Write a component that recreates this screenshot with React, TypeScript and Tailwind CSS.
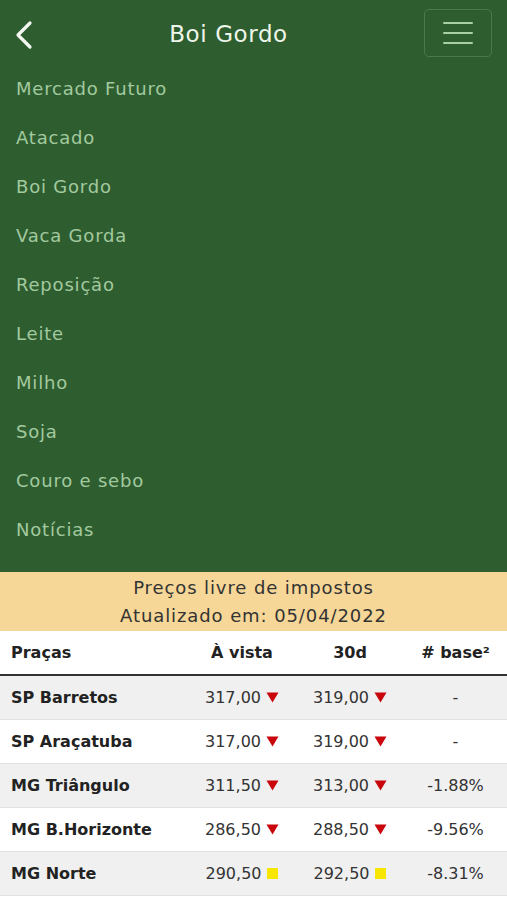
import React from "react";

const menu = [
  "Mercado Futuro",
  "Atacado",
  "Boi Gordo",
  "Vaca Gorda",
  "Reposição",
  "Leite",
  "Milho",
  "Soja",
  "Couro e sebo",
  "Notícias",
];

type Trend = "down" | "flat";

interface Row {
  name: string;
  vista: string;
  d30: string;
  base: string;
  trend: Trend;
}

const rows: Row[] = [
  { name: "SP Barretos", vista: "317,00", d30: "319,00", base: "-", trend: "down" },
  { name: "SP Araçatuba", vista: "317,00", d30: "319,00", base: "-", trend: "down" },
  { name: "MG Triângulo", vista: "311,50", d30: "313,00", base: "-1.88%", trend: "down" },
  { name: "MG B.Horizonte", vista: "286,50", d30: "288,50", base: "-9.56%", trend: "down" },
  { name: "MG Norte", vista: "290,50", d30: "292,50", base: "-8.31%", trend: "flat" },
];

const TrendIcon = ({ trend }: { trend: Trend }) =>
  trend === "down" ? (
    <svg width="13" height="11" viewBox="0 0 13 11" className="ml-[5px]">
      <path d="M0.5 0.5 H12.5 L6.5 10.5 Z" fill="#c8060b" />
    </svg>
  ) : (
    <span className="ml-[6px] inline-block h-[11px] w-[11px] bg-[#f7e600]" />
  );

const Price = ({ value, trend }: { value: string; trend: Trend }) => (
  <div className="flex items-center justify-center">
    <span>{value}</span>
    <TrendIcon trend={trend} />
  </div>
);

export default function App() {
  return (
    <div
      className="h-[900px] w-[507px] overflow-hidden bg-white"
      style={{ fontFamily: '"DejaVu Sans", Verdana, sans-serif' }}
    >
      <div className="bg-[#2e5e30] pb-[18px]">
        <div className="relative flex h-[64px] items-center justify-center">
          <svg
            width="20"
            height="30"
            viewBox="0 0 20 30"
            className="absolute left-[14px] top-[20px]"
          >
            <path
              d="M16 3 L4 15 L16 27"
              fill="none"
              stroke="#f4f8f0"
              strokeWidth="3.2"
              strokeLinecap="round"
              strokeLinejoin="round"
            />
          </svg>
          <h1 className="mr-[50px] mt-[5px] text-[23px] leading-none tracking-[0.6px] text-[#eef5ea]">
            Boi Gordo
          </h1>
          <button className="absolute right-[15px] top-[9px] flex h-[48px] w-[68px] flex-col items-center justify-center gap-[8px] rounded-[5px] border border-[#4a7a4b]">
            <span className="h-[2px] w-[30px] rounded-full bg-[#a8d0a3]" />
            <span className="h-[2px] w-[30px] rounded-full bg-[#a8d0a3]" />
            <span className="h-[2px] w-[30px] rounded-full bg-[#a8d0a3]" />
          </button>
        </div>
        <nav className="flex flex-col">
          {menu.map((m) => (
            <a
              key={m}
              className="flex h-[49px] items-center pl-[16px] text-[18px] tracking-[0.8px] text-[#a3c99f]"
            >
              {m}
            </a>
          ))}
        </nav>
      </div>

      <div className="flex h-[59px] flex-col items-center justify-center bg-[#f6d797] text-[18px] leading-[28px] tracking-[0.9px] text-[#333]">
        <div>Preços livre de impostos</div>
        <div>Atualizado em: 05/04/2022</div>
      </div>

      <div className="text-[16px] text-[#333]">
        <div className="grid h-[45px] grid-cols-[188px_108px_108px_1fr] items-center border-b-2 border-[#333] font-bold text-[#222]">
          <div className="pl-[11px]">Praças</div>
          <div className="text-center">À vista</div>
          <div className="text-center">30d</div>
          <div className="text-center">
            # base<span>²</span>
          </div>
        </div>
        {rows.map((r, i) => (
          <div
            key={r.name}
            className={`grid h-[44px] grid-cols-[188px_108px_108px_1fr] items-center border-b border-[#e2e2e2] ${
              i % 2 === 0 ? "bg-[#f0f0f0]" : "bg-white"
            }`}
          >
            <div className="pl-[11px] font-bold text-[#222]">{r.name}</div>
            <Price value={r.vista} trend={r.trend} />
            <Price value={r.d30} trend={r.trend} />
            <div className="text-center">{r.base}</div>
          </div>
        ))}
      </div>
    </div>
  );
}
